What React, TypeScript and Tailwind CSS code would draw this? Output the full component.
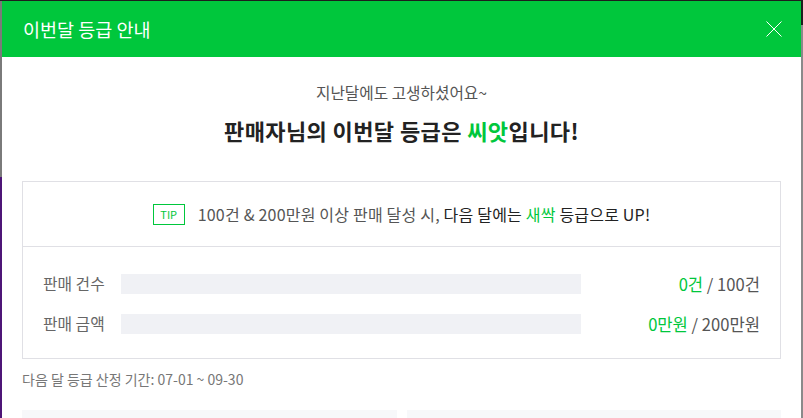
import React from "react";

export default function App() {
  const font = { fontFamily: '"Noto Sans CJK KR", "Noto Sans", sans-serif' };
  return (
    <div className="w-[803px] h-[418px] overflow-hidden bg-[#2a2a2a] flex flex-col" style={font}>
      <div className="h-[1px] shrink-0 bg-[#1e1e1e]" />
      <div className="flex flex-1 min-h-0">
        <div className="w-[2px] shrink-0 flex flex-col">
          <div className="h-[176px] shrink-0 bg-[#7a7a7a]" />
          <div className="flex-1 bg-[#4e1577]" />
        </div>
        <div className="w-[799px] shrink-0 bg-white flex flex-col overflow-hidden">
          <div className="h-[56px] shrink-0 bg-[#00c73c] flex items-center justify-between pl-[21px] pr-[19px]">
            <span className="text-white text-[18.5px] leading-none">이번달 등급 안내</span>
            <svg width="16" height="16" viewBox="0 0 16 16">
              <path d="M0.5 0.5 L15.5 15.5 M15.5 0.5 L0.5 15.5" stroke="white" strokeWidth="1" />
            </svg>
          </div>
          <div className="px-5 flex flex-col shrink-0">
            <p className="mt-[25px] text-center text-[15.7px] leading-[22px] text-[#555]">지난달에도 고생하셨어요~</p>
            <p className="mt-[10px] text-center text-[22px] leading-[32px] font-bold text-[#222] tracking-[0.4px]">
              판매자님의 이번달 등급은 <span className="text-[#00c73c]">씨앗</span>입니다!
            </p>
            <div className="mt-[35px] border border-[#e0e0e5]">
              <div className="h-[65px] flex items-center justify-center border-b border-[#e0e0e5]">
                <span className="w-[32px] h-[21px] border border-[#00c73c] text-[#00c73c] text-[11px] flex items-center justify-center mr-[13px]">TIP</span>
                <span className="text-[16px] text-[#555] tracking-[0.2px]">
                  100건 &amp; 200만원 이상 판매 달성 시,{" "}
                  <span className="text-[#222]">
                    다음 달에는 <span className="text-[#00c73c]">새싹</span> 등급으로 UP!
                  </span>
                </span>
              </div>
              <div className="pt-[27px] pb-[24px] px-5 flex flex-col gap-[20px]">
                {[
                  { label: "판매 건수", cur: "0건", total: "100건" },
                  { label: "판매 금액", cur: "0만원", total: "200만원" },
                ].map((r) => (
                  <div key={r.label} className="flex items-center h-[20px]">
                    <span className="w-[78px] text-[15.8px] text-[#666]">{r.label}</span>
                    <div className="w-[460px] h-[20px] bg-[#f0f1f5]" />
                    <span className="flex-1 text-right text-[16.6px] text-[#555]">
                      <span className="text-[#00c73c]">{r.cur}</span> / {r.total}
                    </span>
                  </div>
                ))}
              </div>
            </div>
            <p className="mt-[10px] text-[14px] leading-[20px] text-[#777]">다음 달 등급 산정 기간: 07-01 ~ 09-30</p>
            <div className="mt-[21px] flex gap-[10px]">
              <div className="flex-1 h-[40px] bg-[#f7f8fa]" />
              <div className="flex-1 h-[40px] bg-[#f7f8fa]" />
            </div>
          </div>
        </div>
        <div className="w-[2px] shrink-0 flex flex-col">
          <div className="h-[24px] shrink-0 bg-[#1e1e1e]" />
          <div className="flex-1 bg-[#8a8a8a]" />
        </div>
      </div>
    </div>
  );
}
